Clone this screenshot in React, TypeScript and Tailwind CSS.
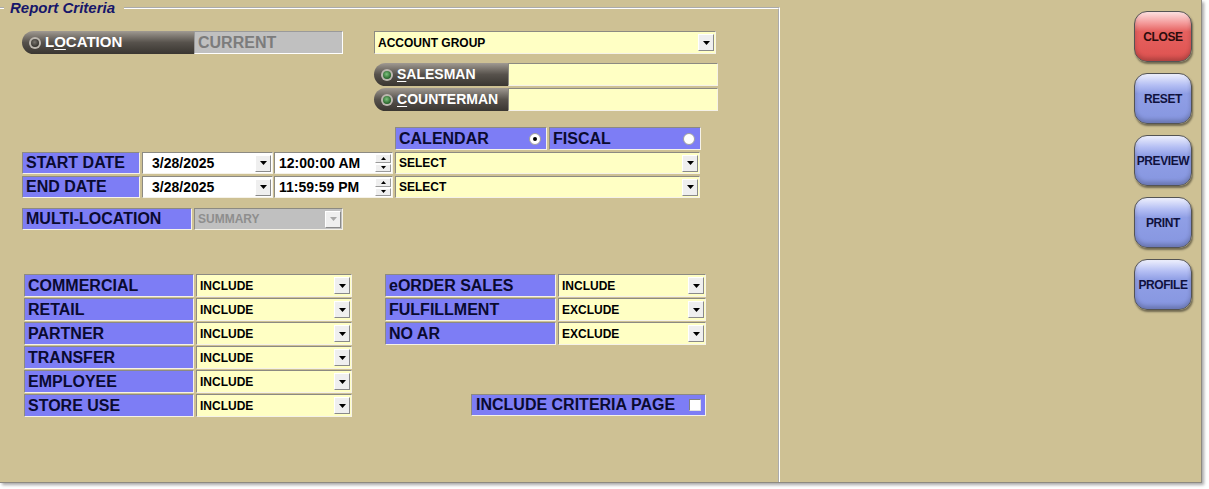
import React from "react"

const sunken =
    "border border-t-[#8c8a82] border-l-[#8c8a82] border-b-[#f5f2e8] border-r-[#f5f2e8]"

function Arrow({ color = "#000" }: { color?: string }) {
    return (
        <svg width="7" height="4" viewBox="0 0 7 4">
            <path d="M0 0h7L3.5 4z" fill={color} />
        </svg>
    )
}

function DropBtn({ disabled }: { disabled?: boolean }) {
    return (
        <div className="w-[16px] h-[17px] mr-[1px] shrink-0 bg-[#efefef] border border-t-white border-l-white border-b-[#8a8a8a] border-r-[#8a8a8a] flex items-center justify-center">
            <Arrow color={disabled ? "#a8a8a8" : "#000"} />
        </div>
    )
}

function Spin() {
    return (
        <div className="w-[16px] h-[18px] mr-[1px] shrink-0 flex flex-col gap-[1px]">
            {[0, 1].map((i) => (
                <div
                    key={i}
                    className="flex-1 bg-[#efefef] border border-t-white border-l-white border-b-[#9a9a9a] border-r-[#9a9a9a] flex items-center justify-center"
                >
                    <svg width="5" height="3" viewBox="0 0 5 3">
                        <path d={i === 0 ? "M0 3h5L2.5 0z" : "M0 0h5L2.5 3z"} fill="#000" />
                    </svg>
                </div>
            ))}
        </div>
    )
}

function Select({
    text,
    className = "",
    textClass = "text-[12px] text-black",
    bg = "bg-[#ffffc4]",
    disabled,
}: {
    text?: string
    className?: string
    textClass?: string
    bg?: string
    disabled?: boolean
}) {
    return (
        <div className={`${sunken} ${bg} ${className} flex items-center justify-between`}>
            <span className={`pl-[3px] font-bold ${textClass}`}>{text}</span>
            <DropBtn disabled={disabled} />
        </div>
    )
}

function Label({
    text,
    className = "",
    children,
}: {
    text: string
    className?: string
    children?: React.ReactNode
}) {
    return (
        <div
            className={`${sunken} bg-[#7d7df5] ${className} flex items-center justify-between pl-[3px] text-[16px] font-bold text-[#0a0a30] whitespace-nowrap`}
        >
            <span>{text}</span>
            {children}
        </div>
    )
}

function Radio({ on }: { on?: boolean }) {
    return (
        <div className="w-[12px] h-[12px] mr-[5px] rounded-full bg-white border border-[#a0a0a0] flex items-center justify-center">
            {on && <div className="w-[4px] h-[4px] rounded-full bg-black" />}
        </div>
    )
}

function Led({ green }: { green?: boolean }) {
    return (
        <div className="w-[12px] h-[12px] rounded-full bg-[#bdb8b0] flex items-center justify-center shrink-0">
            <div
                className={`w-[8px] h-[8px] rounded-full ${
                    green
                        ? "bg-[radial-gradient(circle_at_45%_40%,#7fc47f,#1f5a22_75%)]"
                        : "bg-[radial-gradient(circle_at_45%_40%,#7a7670,#302e2a_75%)]"
                }`}
            />
        </div>
    )
}

function Pill({
    first,
    rest,
    green,
    className,
    size,
}: {
    first: string
    rest: string
    green?: boolean
    className: string
    size: string
}) {
    return (
        <div
            className={`${className} h-full rounded-l-full bg-linear-to-b from-[#a09a92] via-[#57524c] to-[#3a3631] flex items-center pl-[7px] gap-[4px] text-white font-bold ${size}`}
        >
            <Led green={green} />
            <span>
                <span className="underline underline-offset-2">{first}</span>
                {rest}
            </span>
        </div>
    )
}

function LocationPill() {
    return (
        <div className="w-[172px] h-full rounded-l-full bg-linear-to-b from-[#a09a92] via-[#57524c] to-[#3a3631] flex items-center pl-[7px] gap-[4px] text-white font-bold text-[15px]">
            <Led />
            <span>
                L<span className="underline underline-offset-2">O</span>CATION
            </span>
        </div>
    )
}

function GlossButton({ text, red }: { text: string; red?: boolean }) {
    return (
        <button
            className={`w-[58px] h-[51px] rounded-[13px] border border-[#545454] shadow-[1px_2px_2px_rgba(0,0,0,0.45),inset_0_-3px_4px_rgba(0,0,0,0.22)] text-[12px] font-bold tracking-[-0.4px] ${
                red
                    ? "bg-[linear-gradient(#fde0e0_0%,#f49c9c_22%,#e6615f_40%,#de5250_100%)] text-[#2c0c0c]"
                    : "bg-[linear-gradient(#eef0fd_0%,#b6c0f4_22%,#909fe6_40%,#8696e0_100%)] text-[#10123e]"
            }`}
        >
            {text}
        </button>
    )
}

const leftRows = ["COMMERCIAL", "RETAIL", "PARTNER", "TRANSFER", "EMPLOYEE", "STORE USE"]
const rightRows = [
    { label: "eORDER SALES", value: "INCLUDE" },
    { label: "FULFILLMENT", value: "EXCLUDE" },
    { label: "NO AR", value: "EXCLUDE" },
]

export default function App() {
    return (
        <div className="w-[1209px] h-[489px] bg-white font-['Liberation_Sans',Arial,sans-serif]">
            <div className="w-[1202px] h-[483px] bg-[#cec194] border-r border-b border-[#8e8a80] shadow-[2px_2px_3px_rgba(0,0,0,0.35)] flex overflow-hidden">
                <fieldset className="w-[780px] h-[520px] shrink-0 border-t-2 border-r-2 border-white [border-style:groove]">
                    <legend className="ml-[4px] pl-[6px] pr-[9px] text-[15px] leading-[16px] font-bold italic text-[#16166a]">
                        Report Criteria
                    </legend>
                    <div className="flex flex-col">
                        <div className="flex mt-[15px] h-[23px]">
                            <div className="ml-[22px]" />
                            <LocationPill />
                            <div className="w-[149px] h-full bg-[#c0c0c0] border border-t-[#9a9a9a] border-l-[#9a9a9a] border-b-white border-r-white flex items-center pl-[3px] text-[16px] font-bold text-[#7c7c7c]">
                                CURRENT
                            </div>
                            <Select text="ACCOUNT GROUP" className="ml-[31px] w-[342px] h-full" />
                        </div>
                        <div className="flex mt-[9px] h-[23px] ml-[374px]">
                            <Pill first="S" rest="ALESMAN" green className="w-[134px]" size="text-[14px]" />
                            <div className={`${sunken} bg-[#ffffc4] w-[210px] h-full`} />
                        </div>
                        <div className="flex mt-[2px] h-[23px] ml-[374px]">
                            <Pill first="C" rest="OUNTERMAN" green className="w-[134px]" size="text-[14px]" />
                            <div className={`${sunken} bg-[#ffffc4] w-[210px] h-full`} />
                        </div>
                        <div className="flex mt-[16px] h-[23px] ml-[395px] gap-[2px]">
                            <Label text="CALENDAR" className="w-[152px]">
                                <Radio on />
                            </Label>
                            <Label text="FISCAL" className="w-[152px]">
                                <Radio />
                            </Label>
                        </div>
                        {[
                            { label: "START DATE", time: "12:00:00 AM" },
                            { label: "END DATE", time: "11:59:59 PM" },
                        ].map((r) => (
                            <div key={r.label} className="flex h-[22px] ml-[22px] mt-[2px]">
                                <Label text={r.label} className="w-[118px]" />
                                <Select
                                    text="3/28/2025"
                                    bg="bg-white"
                                    className="ml-[2px] w-[131px]"
                                    textClass="pl-[9px] text-[14px] text-black"
                                />
                                <div className={`${sunken} bg-white ml-[1px] w-[119px] flex items-center justify-between`}>
                                    <span className="pl-[4px] text-[14px] font-bold">{r.time}</span>
                                    <Spin />
                                </div>
                                <Select text="SELECT" className="ml-[2px] w-[305px]" />
                            </div>
                        ))}
                        <div className="flex mt-[10px] h-[22px] ml-[22px]">
                            <Label text="MULTI-LOCATION" className="w-[170px]" />
                            <Select
                                text="SUMMARY"
                                bg="bg-[#c0c0c0]"
                                disabled
                                className="ml-[2px] w-[149px]"
                                textClass="text-[12px] text-[#8e8e8e]"
                            />
                        </div>
                        <div className="flex mt-[44px]">
                            <div className="ml-[24px] flex flex-col gap-[1px]">
                                {leftRows.map((l) => (
                                    <div key={l} className="flex h-[23px]">
                                        <Label text={l} className="w-[170px]" />
                                        <Select text="INCLUDE" className="ml-[2px] w-[156px]" />
                                    </div>
                                ))}
                            </div>
                            <div className="ml-[33px] flex flex-col gap-[1px]">
                                {rightRows.map((r) => (
                                    <div key={r.label} className="flex h-[23px]">
                                        <Label text={r.label} className="w-[171px]" />
                                        <Select text={r.value} className="ml-[2px] w-[148px]" />
                                    </div>
                                ))}
                                <Label
                                    text="INCLUDE CRITERIA PAGE"
                                    className="mt-auto mb-[1px] ml-[86px] w-[235px] h-[22px] pl-[4px]"
                                >
                                    <div className="w-[12px] h-[12px] mr-[4px] bg-white border border-t-[#808080] border-l-[#808080] border-b-[#e0e0e0] border-r-[#e0e0e0]" />
                                </Label>
                            </div>
                        </div>
                    </div>
                </fieldset>
                <div className="flex-1 flex flex-col items-end pt-[11px] pr-[9px] gap-[11px]">
                    <GlossButton text="CLOSE" red />
                    <GlossButton text="RESET" />
                    <GlossButton text="PREVIEW" />
                    <GlossButton text="PRINT" />
                    <GlossButton text="PROFILE" />
                </div>
            </div>
        </div>
    )
}
